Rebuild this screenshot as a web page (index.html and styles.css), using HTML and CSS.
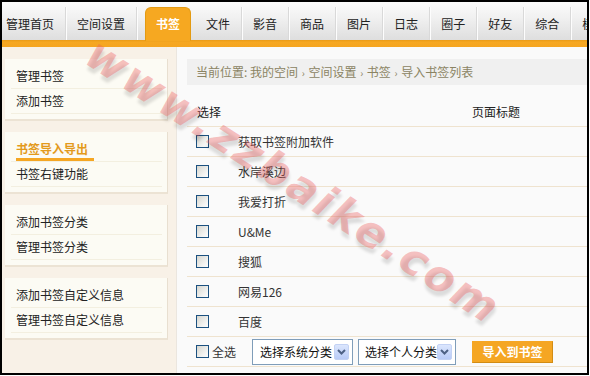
FILE: index.html
```html
<!DOCTYPE html>
<html lang="zh-CN">
<head>
    <meta charset="UTF-8">
    <title>书签 - 导入书签列表</title>
    <link rel="stylesheet" href="styles.css">
</head>
<body>

<div class="frame">
    <div class="nav">
        <a class="tab first">管理首页</a>
        <a class="tab">空间设置</a>
        <a class="tab active">书签</a>
        <a class="tab">文件</a>
        <a class="tab">影音</a>
        <a class="tab">商品</a>
        <a class="tab">图片</a>
        <a class="tab">日志</a>
        <a class="tab">圈子</a>
        <a class="tab">好友</a>
        <a class="tab">综合</a>
        <a class="tab">模板</a>
    </div>
    <div class="nav-line"></div>

    <div class="main">
        <div class="side">
            <ul class="side-box">
                <li>管理书签</li>
                <li>添加书签</li>
            </ul>
            <ul class="side-box">
                <li class="current"><span>书签导入导出</span></li>
                <li>书签右键功能</li>
            </ul>
            <ul class="side-box">
                <li>添加书签分类</li>
                <li>管理书签分类</li>
            </ul>
            <ul class="side-box">
                <li>添加书签自定义信息</li>
                <li>管理书签自定义信息</li>
            </ul>
        </div>

        <div class="content">
            <div class="crumb">当前位置: 我的空间 <span class="sep">›</span> 空间设置 <span class="sep">›</span> 书签 <span class="sep">›</span> 导入书签列表</div>

            <div class="list">
                <div class="row head">
                    <div class="c-check">选择</div>
                    <div class="c-title">页面标题</div>
                </div>
                <div class="row">
                    <div class="c-check"><span class="cb"></span></div>
                    <div class="c-title">获取书签附加软件</div>
                </div>
                <div class="row">
                    <div class="c-check"><span class="cb"></span></div>
                    <div class="c-title">水岸溪边</div>
                </div>
                <div class="row">
                    <div class="c-check"><span class="cb"></span></div>
                    <div class="c-title">我爱打折</div>
                </div>
                <div class="row">
                    <div class="c-check"><span class="cb"></span></div>
                    <div class="c-title">U&amp;Me</div>
                </div>
                <div class="row">
                    <div class="c-check"><span class="cb"></span></div>
                    <div class="c-title">搜狐</div>
                </div>
                <div class="row">
                    <div class="c-check"><span class="cb"></span></div>
                    <div class="c-title">网易126</div>
                </div>
                <div class="row">
                    <div class="c-check"><span class="cb"></span></div>
                    <div class="c-title">百度</div>
                </div>
                <div class="row foot">
                    <label class="check-all"><span class="cb"></span>全选</label>
                    <div class="select sys">
                        <span class="label">选择系统分类</span>
                        <span class="arrow"><svg width="9" height="6" viewBox="0 0 9 6"><path d="M1 1 L4.5 4.5 L8 1" fill="none" stroke="#4d6185" stroke-width="2"/></svg></span>
                    </div>
                    <div class="select own">
                        <span class="label">选择个人分类</span>
                        <span class="arrow"><svg width="9" height="6" viewBox="0 0 9 6"><path d="M1 1 L4.5 4.5 L8 1" fill="none" stroke="#4d6185" stroke-width="2"/></svg></span>
                    </div>
                    <button class="btn-import">导入到书签</button>
                </div>
            </div>
        </div>
    </div>

    <div class="watermark">www.zzbaike.com</div>
</div>

</body>
</html>
```

FILE: styles.css
```css
/* General */
body {
    margin: 0;
    padding: 0;
    background: #fff;
    font-family: "Noto Sans CJK SC", "DejaVu Sans", sans-serif;
    font-size: 12px;
    color: #333;
}

.frame {
    position: relative;
    width: 589px;
    height: 375px;
    border: 2px solid #000;
    box-sizing: border-box;
    overflow: hidden;
    background: #fafafa;
}

/* Top navigation */
.nav {
    display: flex;
    height: 38px;
    padding-top: 5px;
    box-sizing: border-box;
    background: linear-gradient(#fbfbfb, #f1f1f1 40%, #dedede);
    white-space: nowrap;
}

.tab {
    flex: none;
    height: 33px;
    line-height: 33px;
    padding: 0 11px;
    color: #222;
    border-right: 1px solid #d9d9d9;
    box-shadow: 1px 0 0 #fdfdfd;
}

.tab.first {
    padding-left: 4px;
    padding-right: 11px;
}

.tab.active {
    margin: 0 4px 0 8px;
    padding: 0 10px;
    height: 34px;
    color: #fff;
    font-weight: bold;
    background: #f6a821;
    border: 1px solid #e39a12;
    border-bottom: none;
    border-radius: 6px 6px 0 0;
    box-shadow: none;
    box-sizing: border-box;
    line-height: 32px;
}

.nav-line {
    height: 7px;
    background: linear-gradient(#e99a16, #f6a823 30%, #f5a520);
}

/* Layout */
.main {
    display: flex;
    height: 326px;
}

.side {
    width: 175px;
    padding: 12px 0 0 3px;
    box-sizing: border-box;
    background: #f8f1e7;
    border-right: 1px solid #ebe6df;
}

.side-box {
    list-style: none;
    margin: 0 0 11px;
    width: 163px;
    padding: 5px 5px 5px 6px;
    box-sizing: border-box;
    background: #fcfbf4;
    border-right: 1px solid #e8dfd0;
    border-bottom: 2px solid #ece3d4;
}

.side-box li {
    height: 24px;
    line-height: 24px;
    padding-left: 5px;
    border-bottom: 1px solid #f3efe0;
    color: #222;
}

.side-box li.current {
    display: flex;
    align-items: flex-end;
}

.side-box li.current span {
    line-height: 18px;
    padding-right: 6px;
    color: #e39a1c;
    font-weight: bold;
    border-bottom: 3px solid #f5a623;
}

/* Content */
.content {
    flex: 1;
    padding: 12px 0 0 10px;
    background: #fafafa;
}

.crumb {
    height: 26px;
    line-height: 26px;
    padding-left: 9px;
    background: #f0f0f0;
    color: #8b8463;
}

.crumb .sep {
    font-size: 10px;
    margin: 0 1px;
}

.list {
    margin-top: 12px;
}

.row {
    display: flex;
    align-items: center;
    height: 29px;
    border-bottom: 1px solid #efe3cf;
}

.c-check {
    width: 42px;
    padding-left: 9px;
    box-sizing: border-box;
    display: flex;
    align-items: center;
}

.c-title {
    padding-left: 9px;
}

.row.head .c-check {
    padding-left: 10px;
    color: #222;
}

.row.head .c-title {
    padding-left: 243px;
    color: #222;
}

.cb {
    display: inline-block;
    width: 13px;
    height: 13px;
    box-sizing: border-box;
    border: 1px solid #1c5180;
    background: linear-gradient(135deg, #d6d6cf, #f4f4f2 70%, #fdfdfd);
}

/* Footer controls */
.row.foot {
    padding-left: 9px;
}

.check-all {
    flex: none;
    display: flex;
    align-items: center;
    gap: 3px;
    margin-right: 16px;
}

.select {
    flex: none;
    display: flex;
    align-items: center;
    justify-content: space-between;
    height: 26px;
    padding: 0 3px 0 7px;
    box-sizing: border-box;
    border: 1px solid #7f9db9;
    background: #fff;
    color: #111;
    white-space: nowrap;
}

.select .label {
    flex: none;
}

.select.sys {
    width: 101px;
    margin-right: 5px;
}

.select.own {
    width: 98px;
    padding-left: 6px;
    margin-right: 16px;
}

.arrow {
    flex: none;
    display: flex;
    align-items: center;
    justify-content: center;
    width: 15px;
    height: 16px;
    border-radius: 2px;
    background: linear-gradient(#dbe6fd, #b8cbf8);
    border: 1px solid #c3d2f4;
    box-sizing: border-box;
}

.btn-import {
    flex: none;
    width: 81px;
    height: 22px;
    padding: 0;
    font-family: inherit;
    font-size: 12px;
    font-weight: bold;
    color: #fff;
    background: #f5a623;
    border: 1px solid #f5a623;
    border-right-color: #d28c15;
    border-bottom-color: #d28c15;
}

/* Watermark over the page */
.watermark {
    position: absolute;
    left: 50px;
    top: 152px;
    width: 480px;
    text-align: center;
    font-family: "DejaVu Sans", sans-serif;
    font-size: 44px;
    font-weight: bold;
    font-style: italic;
    letter-spacing: 3px;
    color: rgba(236, 96, 96, 0.38);
    text-shadow: 3px 4px 3px rgba(0, 0, 0, 0.12);
    transform: rotate(33deg);
    pointer-events: none;
}
```
